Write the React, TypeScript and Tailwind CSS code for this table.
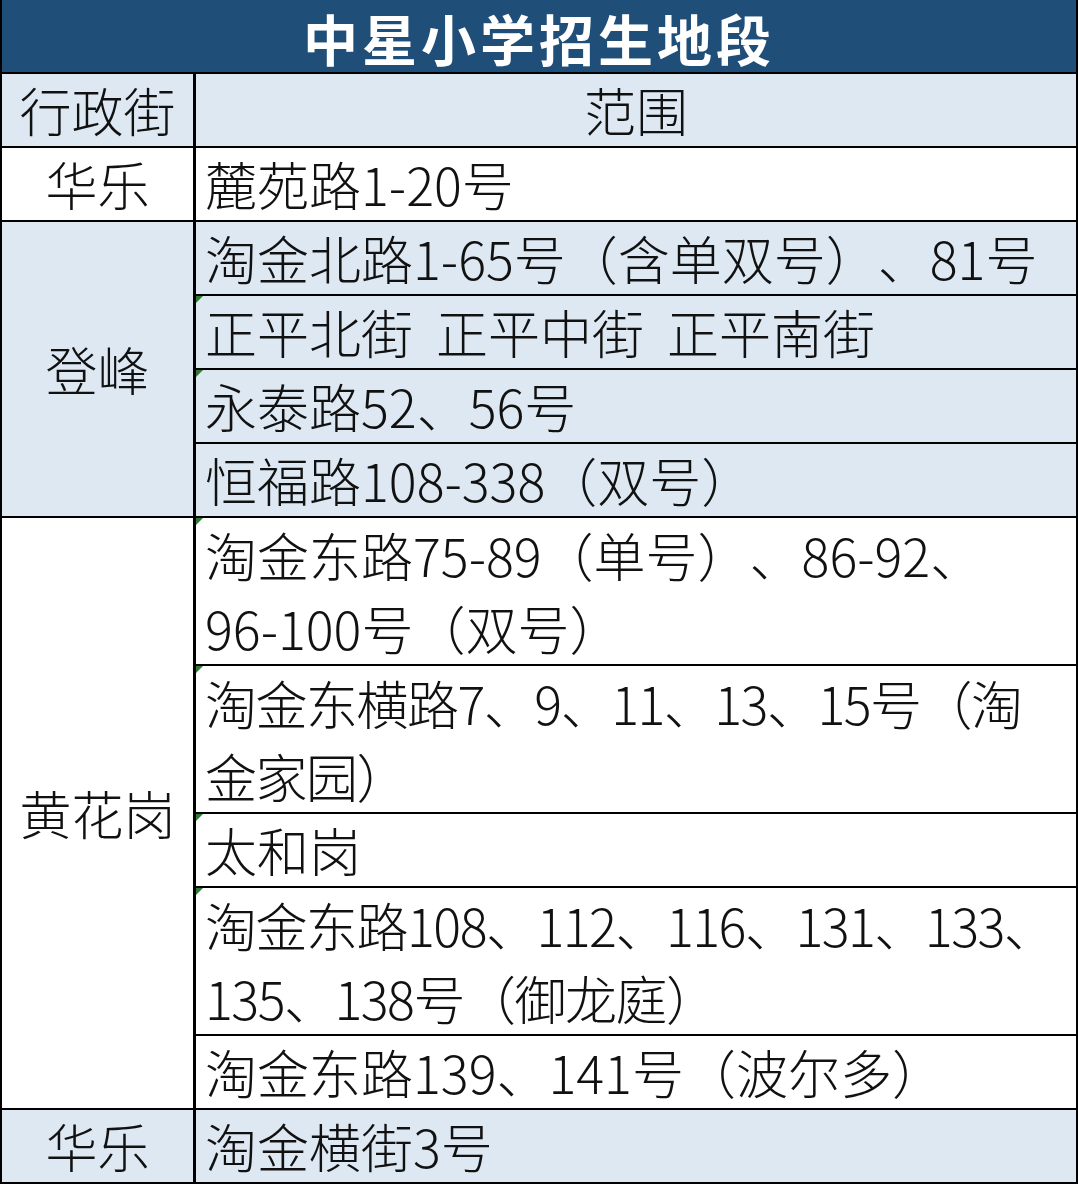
import React from 'react';

type Line = { text: string[]; flag?: boolean; tight?: boolean };
type Group = { name: string; blue: boolean; items: Line[] };

const groups: Group[] = [
  { name: '华乐', blue: false, items: [{ text: ['麓苑路1-20号'] }] },
  {
    name: '登峰',
    blue: true,
    items: [
      { text: ['淘金北路1-65号（含单双号）、81号'] },
      { text: ['正平北街  正平中街  正平南街'], flag: true },
      { text: ['永泰路52、56号'], flag: true },
      { text: ['恒福路108-338（双号）'] },
    ],
  },
  {
    name: '黄花岗',
    blue: false,
    items: [
      { text: ['淘金东路75-89（单号）、86-92、', '96-100号（双号）'], flag: true },
      { text: ['淘金东横路7、9、11、13、15号（淘', '金家园）'], flag: true, tight: true },
      { text: ['太和岗'], flag: true },
      { text: ['淘金东路108、112、116、131、133、', '135、138号（御龙庭）'], flag: true, tight: true },
      { text: ['淘金东路139、141号（波尔多）'] },
    ],
  },
  { name: '华乐', blue: true, items: [{ text: ['淘金横街3号'] }] },
];

const font = { fontFamily: '"Noto Sans CJK SC Light", "Noto Sans CJK SC", "Noto Sans", sans-serif' };
const titleFont = { fontFamily: '"Noto Sans CJK SC", "Noto Sans", sans-serif' };

function Flag() {
  return (
    <span className="absolute left-0 top-0 h-0 w-0 border-t-[7px] border-r-[7px] border-t-[#2f7a34] border-r-transparent" />
  );
}

function itemClass(first: boolean, double: boolean) {
  if (first && !double) return 'h-[72px] leading-[72px]';
  if (!first && !double) return 'h-[74px] leading-[72px] border-t-2 border-black';
  if (first && double) return 'h-[146px] leading-[73px]';
  return 'h-[148px] leading-[73px] border-t-2 border-black';
}

export default function App() {
  return (
    <div
      className="w-[1078px] h-[1184px] overflow-hidden border-2 border-t-0 border-black bg-white text-[#111] font-light [text-spacing-trim:space-all]"
      style={font}
    >
      <div
        className="h-[72px] bg-[#1f4e79] text-center text-white text-[55px] font-bold tracking-[4px] leading-[74px]"
        style={titleFont}
      >
        中星小学招生地段
      </div>

      <div className="flex border-t-2 border-black bg-[#dde8f3] h-[74px]">
        <div className="w-[194px] shrink-0 border-r-[3px] border-black flex items-center justify-center text-[52px] leading-none">
          行政街
        </div>
        <div className="flex-1 flex items-center justify-center text-[52px] leading-none">范围</div>
      </div>

      {groups.map((g, gi) => (
        <div key={gi} className={`flex border-t-2 border-black ${g.blue ? 'bg-[#dde8f3]' : 'bg-white'}`}>
          <div className="w-[194px] shrink-0 border-r-[3px] border-black flex items-center justify-center text-[52px] leading-none">
            {g.name}
          </div>
          <div className="flex-1 flex flex-col">
            {g.items.map((it, ii) => (
              <div
                key={ii}
                className={`relative pl-[9px] text-[52px] whitespace-pre ${it.tight ? 'tracking-[-1.5px]' : ''} ${itemClass(
                  ii === 0,
                  it.text.length > 1
                )}`}
              >
                {it.flag && <Flag />}
                {it.text.map((t, ti) => (
                  <div key={ti}>{t}</div>
                ))}
              </div>
            ))}
          </div>
        </div>
      ))}
    </div>
  );
}
